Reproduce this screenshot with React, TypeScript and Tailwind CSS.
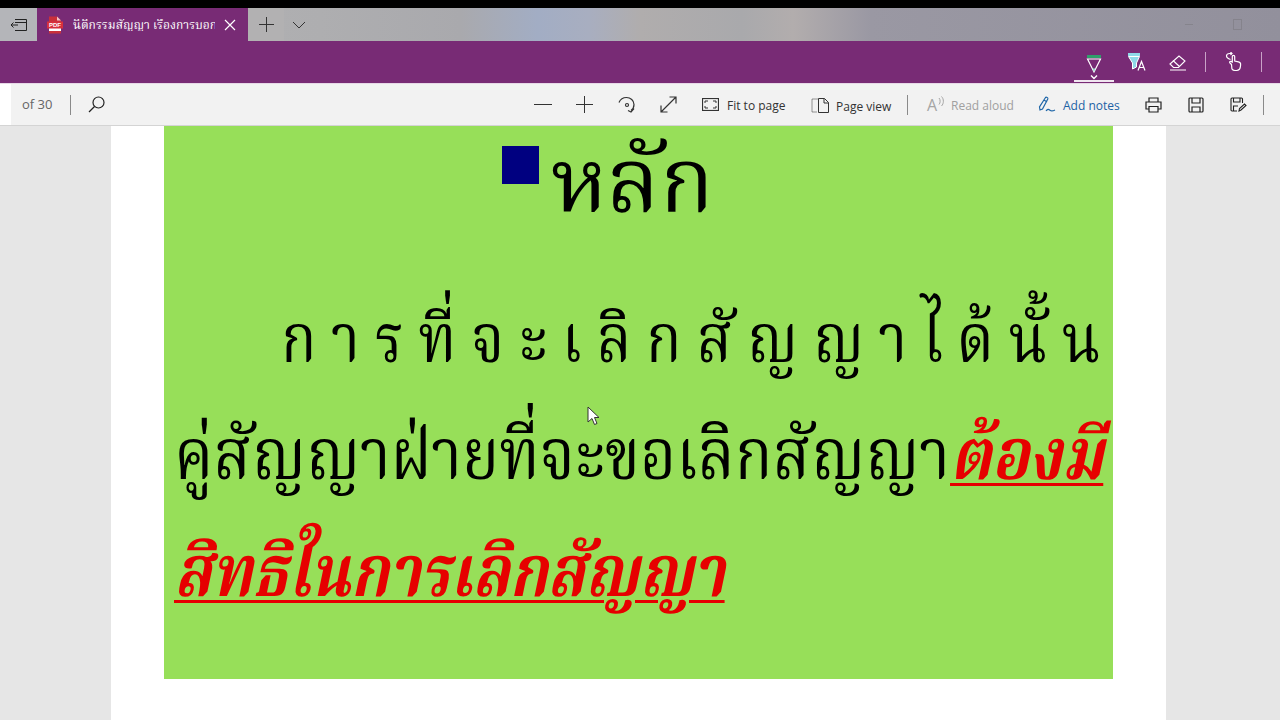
const thai = "font-['Liberation_Serif','Noto_Serif_Thai','Noto_Sans_Thai','Noto_Sans',serif]";

function TabStrip() {
  return (
    <div className="flex h-[33px] bg-[linear-gradient(90deg,#b5b5b8_0%,#aeaeb0_25%,#a9a9ad_36%,#a2adc4_42%,#a8aec0_46%,#b0adad_50%,#a9a9ac_58%,#b2adad_62%,#9a98a3_68%,#92909c_100%)]">
      <div className="flex w-[37px] items-center justify-center bg-[#b4b5b9]">
        <svg width="18" height="14" viewBox="0 0 18 14" fill="none" stroke="#222" strokeWidth="1">
          <path d="M5 1.500h11.500v11H5M5 4.500h11.500M1 7h7M3.500 4.500L1 7l2.500 2.500" />
        </svg>
      </div>
      <div className="flex h-[33px] w-[211px] items-center bg-[#782b75] pl-[10px]">
        <svg width="16" height="18" viewBox="0 0 16 18">
          <path d="M2 0.500h8l4 4v13H2z" fill="#c9303a" />
          <path d="M10 0.500v4h4z" fill="#f3c4c7" />
          <rect x="0" y="5.500" width="16" height="7" fill="#d8303c" />
          <rect x="2" y="12.500" width="12" height="2.500" fill="#fff" />
          <text x="8" y="11" textAnchor="middle" fontSize="6" fontWeight="700" fontFamily="Liberation Sans" fill="#fff">PDF</text>
        </svg>
        <span className={`${thai} ml-[10px] w-[142px] overflow-hidden text-[12px] leading-none whitespace-nowrap text-white`}>นิติกรรมสัญญา เรื่องการบอกเลิก</span>
        <svg className="ml-[9px]" width="12" height="12" viewBox="0 0 12 12" stroke="#fff" strokeWidth="1.200">
          <path d="M1 1l10 10M11 1L1 11" />
        </svg>
      </div>
      <div className="flex w-[36px] items-center justify-center bg-[#b2b1b2]">
        <svg width="15" height="15" viewBox="0 0 15 15" stroke="#333" strokeWidth="1">
          <path d="M7.500 0v15M0 7.500h15" />
        </svg>
      </div>
      <div className="flex w-[30px] items-center justify-center">
        <svg width="14" height="8" viewBox="0 0 14 8" fill="none" stroke="#333" strokeWidth="1">
          <path d="M1 1l6 6 6-6" />
        </svg>
      </div>
      <div className="flex-1" />
      <div className="flex items-center gap-[40px] pr-[38px] opacity-30">
        <div className="h-px w-[8px] bg-[#666]" />
        <div className="h-[11px] w-[9px] border border-[#666]" />
      </div>
    </div>
  );
}

function InkBar() {
  return (
    <div className="flex h-[43px] items-center justify-end border-b border-[#e7d8e7] bg-[#782b75]">
      <div className="mb-[1px] mr-[13px] flex h-[41px] w-[40px] flex-col items-center justify-end border-b-2 border-[#f0e6f0]">
        <svg width="18" height="26" viewBox="0 0 18 26" fill="none" stroke="#fff" strokeWidth="1.200">
          <rect x="2" y="1" width="14" height="3" fill="#2f9e6b" stroke="none" />
          <path d="M2.500 5l6.500 13 6.500-13z" />
          <path d="M7.500 14.500h3L9 18z" fill="#9fe3d0" stroke="none" />
          <path d="M6 21.500l3 3 3-3" strokeWidth="1.400" />
        </svg>
      </div>
      <svg className="mr-[22px]" width="20" height="20" viewBox="0 0 20 20" fill="none">
        <rect x="1" y="1" width="12" height="3" fill="#8fd9e8" />
        <path d="M1.500 4.500h11L9.500 11v4l-4 2V11z" fill="#8fd9e8" stroke="#fff" strokeWidth="1" />
        <path d="M11 18.500l3.500-9 3.500 9M12.300 15.500h4.400" stroke="#fff" strokeWidth="1.200" />
      </svg>
      <svg className="mr-[18px]" width="18" height="17" viewBox="0 0 18 17" fill="none" stroke="#fff" strokeWidth="1.100">
        <path d="M1 10L10 2l6 5-6.500 6.500H4.500z" />
        <path d="M4 6.500l6.500 6M1 16h16" />
      </svg>
      <div className="mr-[19px] h-[20px] w-px bg-[#c9a3c7]" />
      <svg className="mr-[18px]" width="18" height="20" viewBox="0 0 18 20" fill="none" stroke="#fff" strokeWidth="1.200">
        <path d="M6.500 12.500L5 11c-.8-.8-.2-2 .9-1.600l1.400.6V4.500a1.200 1.200 0 0 1 2.400 0V9l3.700.8c1.500.3 2.400 1.500 2.200 3l-.3 2.400c-.3 1.900-1.700 3.300-3.600 3.300h-1.800c-1.300 0-2.300-.6-3-1.600z" />
        <path d="M5.500 7.500C3 6.800 1.500 5.500 1.500 3.800 1.500 2.500 2.700 1.500 4.500 1.500h2.500M5.500 0L7 1.500 5.500 3" />
      </svg>
      <div className="mr-[18px] h-[20px] w-px bg-[#c9a3c7]" />
    </div>
  );
}

function ToolBar() {
  return (
    <div className="flex h-[42px] border-b border-[#d4d4d4] bg-[#f2f2f2]">
      <div className="w-[11px] bg-white" />
      <div className="flex items-center text-[13px] text-[#666] font-['Open_Sans',sans-serif]">
        <span className="ml-[11px] w-[48px]">of 30</span>
        <div className="h-[20px] w-px bg-[#8a8a8a]" />
        <svg className="ml-[17px]" width="17" height="17" viewBox="0 0 17 17" fill="none" stroke="#222" strokeWidth="1.200">
          <circle cx="10.500" cy="6.500" r="5.500" />
          <path d="M6.500 10.500L1 16" />
        </svg>
      </div>
      <div className="flex-1" />
      <div className="flex items-center text-[12px] text-[#333] font-['Open_Sans',sans-serif]">
        <div className="h-px w-[18px] bg-[#333]" />
        <svg className="ml-[24px]" width="17" height="17" viewBox="0 0 17 17" stroke="#333" strokeWidth="1">
          <path d="M8.500 0v17M0 8.500h17" />
        </svg>
        <svg className="ml-[25px]" width="18" height="18" viewBox="0 0 18 18" fill="none" stroke="#333" strokeWidth="1.200">
          <path d="M1 6.500C2.500 3 5.500 1.500 8.500 1.500c4 0 7.500 3 7.500 7 0 2.500-1 4.500-3 6" />
          <circle cx="9" cy="9" r="1.500" />
          <path d="M16 12.500l-3 3.500-3-1.500" />
        </svg>
        <svg className="ml-[24px]" width="17" height="17" viewBox="0 0 17 17" fill="none" stroke="#333" strokeWidth="1.200">
          <path d="M1 16L16 1M9.500 1H16v6.500M1 9.500V16h6.500" />
        </svg>
        <svg className="ml-[25px]" width="17" height="13" viewBox="0 0 17 13" fill="none" stroke="#333" strokeWidth="1">
          <rect x=".5" y=".5" width="16" height="12" strokeWidth="1.200" />
          <path d="M3 5V3h3M11 3h3v2M14 8v2h-3M6 10H3V8" />
        </svg>
        <span className="ml-[8px] mt-[2px] w-[59px] whitespace-nowrap">Fit to page</span>
        <svg className="ml-[25px] mt-[2px]" width="18" height="15" viewBox="0 0 18 15" fill="none" stroke="#333">
          <path d="M6.500 1H1v13h5.500" strokeDasharray="1 1" />
          <path d="M7.500 .5h6l4 4v10h-10zM13 .5V5h4.500" />
        </svg>
        <span className="ml-[7px] mt-[4px] w-[55px] whitespace-nowrap">Page view</span>
        <div className="ml-[16px] h-[20px] w-px bg-[#8a8a8a]" />
        <span className="ml-[19px] w-[11px] text-[16px] leading-none text-[#a5a5a5]">A</span>
        <svg width="7" height="11" viewBox="0 0 7 11" fill="none" stroke="#a5a5a5" className="mb-[6px]">
          <path d="M1 2c1.500 1.500 1.500 5 0 6.500M3.500 .5c2.500 2.500 2.500 7 0 9.500" />
        </svg>
        <span className="ml-[6px] mt-[2px] w-[61px] whitespace-nowrap text-[#a0a0a0]">Read aloud</span>
        <svg className="ml-[26px]" width="18" height="17" viewBox="0 0 18 17" fill="none" stroke="#1f66a8" strokeWidth="1.200">
          <path d="M2 14L1.500 11 7.500 1.500c.7-.8 2.800.5 2.300 1.500L4.500 13zM6 4l3 2" />
          <path d="M8 15c1.500-2 2.500-2 4-.7s2.500 1 5-.3" />
        </svg>
        <span className="ml-[7px] mt-[2px] w-[57px] whitespace-nowrap text-[#1c62a5]">Add notes</span>
        <svg className="ml-[25px]" width="17" height="16" viewBox="0 0 17 16" fill="none" stroke="#222" strokeWidth="1.200">
          <path d="M4 5V1h9v4M4 12H1V5h15v7h-3M4 9.500h9V15H4z" />
        </svg>
        <svg className="ml-[26px]" width="16" height="16" viewBox="0 0 16 16" fill="none" stroke="#222" strokeWidth="1.200">
          <path d="M2 1h12a1 1 0 0 1 1 1v12a1 1 0 0 1-1 1H2a1 1 0 0 1-1-1V2a1 1 0 0 1 1-1zM4 1v5h8V1M4 15v-5h8v5" />
        </svg>
        <svg className="ml-[26px]" width="17" height="15" viewBox="0 0 17 15" fill="none" stroke="#222" strokeWidth="1.100">
          <path d="M7 14H2a1 1 0 0 1-1-1V2a1 1 0 0 1 1-1h9.500a1 1 0 0 1 1 1v4M3.500 1v4h6.500V1M3.500 14V9H8" />
          <path d="M9 14l.5-2.500L14.500 7l1.500 1.500-5 4.500z" />
        </svg>
        <div className="ml-[16px] mr-[16px] h-[20px] w-px bg-[#8a8a8a]" />
      </div>
    </div>
  );
}

function Slide() {
  return (
    <div className={`${thai} h-[553px] bg-[#97df59] pt-[20px] text-black`}>
      <div className="ml-[338px] flex h-[98px]">
        <div className="h-[38px] w-[37px] bg-[#000080]" />
        <div className="ml-[12px] -mt-[14px] text-[89px] leading-[98px]">หลัก</div>
      </div>
      <div className="ml-[117px] mt-[51px] h-[88px] w-fit origin-left scale-x-[.86] whitespace-nowrap text-[68px] leading-[88px] tracking-[17px]">การที่จะเลิกสัญญาได้นั้น</div>
      <div className="ml-[10px] mt-[28px] h-[88px] w-fit origin-left scale-x-[.863] whitespace-nowrap text-[72px] leading-[88px]">
        คู่สัญญาฝ่ายที่จะขอเลิกสัญญา
        <span className="font-bold italic text-[#e60000] underline decoration-[3px] underline-offset-[4px]">ต้องมี</span>
      </div>
      <div className="ml-[10px] mt-[29px] h-[88px] w-fit origin-left scale-x-[.836] whitespace-nowrap text-[72px] font-bold italic leading-[88px] text-[#e60000] underline decoration-[3px] underline-offset-[4px]">สิทธิในการเลิกสัญญา</div>
    </div>
  );
}

export default function App() {
  return (
    <div className="flex h-[720px] w-[1280px] flex-col overflow-hidden bg-black pt-[8px]">
      <TabStrip />
      <InkBar />
      <ToolBar />
      <div className="relative flex flex-1 justify-center bg-[#e6e6e6] pr-[1px]">
        <div className="ml-[-3px] h-full w-[1055px] bg-white px-[53px]">
          <Slide />
        </div>
        <svg className="absolute left-[587px] top-[280px]" width="13" height="20" viewBox="0 0 13 20" fill="#fff" stroke="#333" strokeWidth="1">
          <path d="M1 1v15l4-3.500 2.500 6 2.500-1-2.500-6H12z" />
        </svg>
      </div>
    </div>
  );
}
